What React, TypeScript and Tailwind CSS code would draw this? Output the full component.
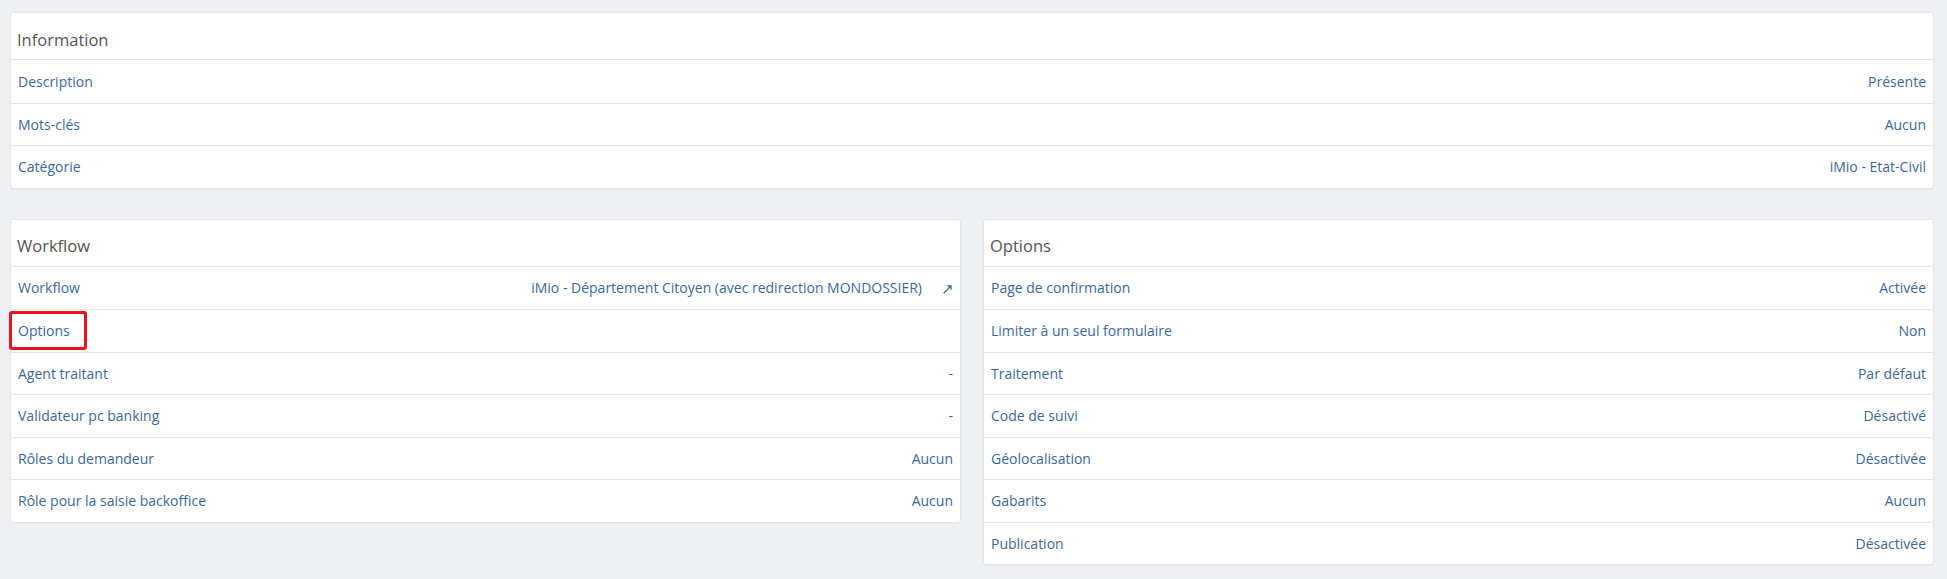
import React from 'react';

type Row = { label: string; value?: string; link?: boolean };

const info: Row[] = [
  { label: 'Description', value: 'Présente' },
  { label: 'Mots-clés', value: 'Aucun' },
  { label: 'Catégorie', value: 'iMio - Etat-Civil' },
];

const workflow: Row[] = [
  { label: 'Workflow', value: 'iMio - Département Citoyen (avec redirection MONDOSSIER)', link: true },
  { label: 'Options' },
  { label: 'Agent traitant', value: '-' },
  { label: 'Validateur pc banking', value: '-' },
  { label: 'Rôles du demandeur', value: 'Aucun' },
  { label: 'Rôle pour la saisie backoffice', value: 'Aucun' },
];

const options: Row[] = [
  { label: 'Page de confirmation', value: 'Activée' },
  { label: 'Limiter à un seul formulaire', value: 'Non' },
  { label: 'Traitement', value: 'Par défaut' },
  { label: 'Code de suivi', value: 'Désactivé' },
  { label: 'Géolocalisation', value: 'Désactivée' },
  { label: 'Gabarits', value: 'Aucun' },
  { label: 'Publication', value: 'Désactivée' },
];

function Section({ title, rows, highlight }: { title: string; rows: Row[]; highlight?: string }) {
  return (
    <div className="self-start bg-white border border-[#e3e5e8] rounded-[3px] shadow-[0_1px_2px_rgba(0,0,0,0.03)]">
      <div className="h-[47px] flex items-end pb-[11px] px-[6px] border-b border-[#e3e5e8]">
        <h2 className="text-[16.5px] leading-none text-[#555]">{title}</h2>
      </div>
      <ul>
        {rows.map((row, i) => (
          <li
            key={row.label}
            className={`relative h-[42.5px] flex items-center justify-between px-[7px] text-[14px] text-[#3b689b] ${
              i > 0 ? 'border-t border-[#e3e5e8]' : ''
            }`}
          >
            <span>{row.label}</span>
            {row.value && (
              <span className="flex items-center">
                {row.value}
                {row.link && <span className="ml-[19px] mr-[-1px] text-[15px]">↗</span>}
              </span>
            )}
            {highlight === row.label && (
              <span className="absolute left-[-2px] top-[1px] w-[78px] h-[39px] border-[3px] border-[#e8141b] rounded-[3px]" />
            )}
          </li>
        ))}
      </ul>
    </div>
  );
}

export default function App() {
  return (
    <div
      className="min-h-[579px] bg-[#eff0f3] pl-[10px] pr-[13px] pt-[12px]"
      style={{ fontFamily: '"Open Sans", sans-serif' }}
    >
      <Section title="Information" rows={info} />
      <div className="mt-[30px] grid grid-cols-2 gap-[22px]">
        <Section title="Workflow" rows={workflow} highlight="Options" />
        <Section title="Options" rows={options} />
      </div>
    </div>
  );
}
